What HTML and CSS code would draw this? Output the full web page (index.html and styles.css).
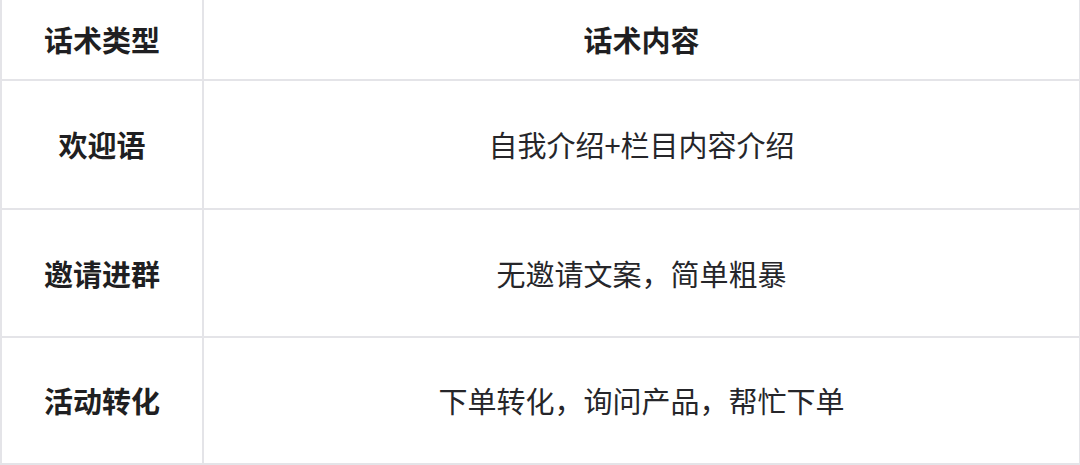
FILE: index.html
```html
<!DOCTYPE html>
<html lang="zh">
<head>
<meta charset="utf-8">
<link rel="stylesheet" href="styles.css">
</head>
<body>
<div class="table">
  <div class="cell head">话术类型</div>
  <div class="cell head">话术内容</div>
  <div class="cell type">欢迎语</div>
  <div class="cell text">自我介绍+栏目内容介绍</div>
  <div class="cell type">邀请进群</div>
  <div class="cell text">无邀请文案，简单粗暴</div>
  <div class="cell type">活动转化</div>
  <div class="cell text">下单转化，询问产品，帮忙下单</div>
</div>
</body>
</html>
```

FILE: styles.css
```css
html, body {
  margin: 0;
  padding: 0;
  background: #ffffff;
}
body {
  width: 1080px;
  height: 465px;
  overflow: hidden;
  font-family: "Noto Sans CJK SC", "Noto Sans", sans-serif;
  color: #1f1f22;
}
.table {
  display: grid;
  grid-template-columns: 200px 1fr;
  grid-template-rows: 79px 127px 126px 125px;
  gap: 2px;
  padding: 0 1px 2px 2px;
  background: #e4e4e8;
  width: 1080px;
  box-sizing: border-box;
}
.cell {
  background: #ffffff;
  display: flex;
  align-items: center;
  justify-content: center;
  font-size: 29px;
  line-height: 1;
}
.head, .type {
  font-weight: 700;
}
.text {
  font-weight: 400;
  color: #26262a;
}
```
